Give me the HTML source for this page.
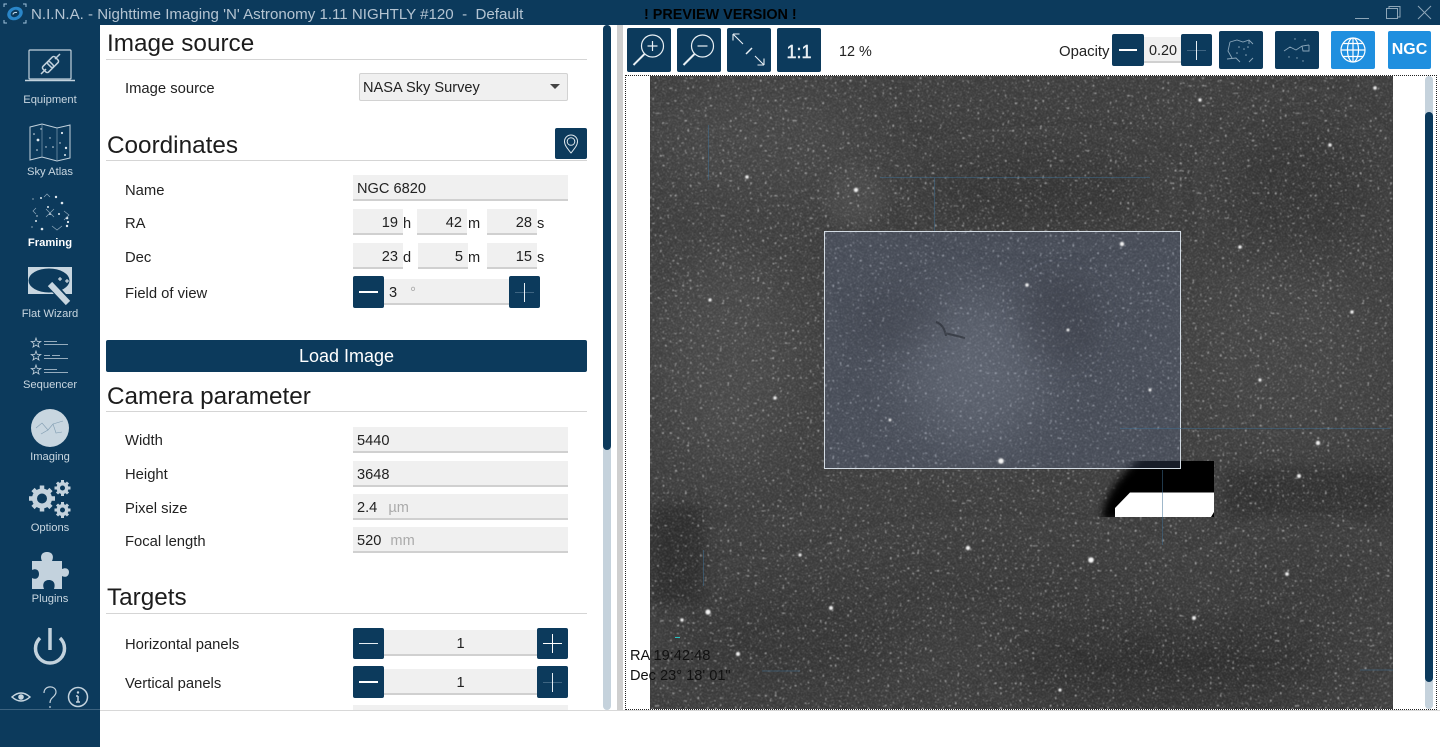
<!DOCTYPE html>
<html lang="en">
<head>
<meta charset="utf-8">
<title>N.I.N.A. Framing</title>
<style>
html,body{margin:0;padding:0;background:#fff}
body{position:relative;width:1440px;height:747px;overflow:hidden;font-family:"Liberation Sans",sans-serif;color:#1a1a1a}
.a{position:absolute}
.top{left:0;top:0;width:1440px;height:25px;background:#0c3a5c}
.side{left:0;top:25px;width:100px;height:722px;background:#0c3a5c}
.nav{position:absolute;left:0;width:100px;text-align:center;font-size:11.2px;color:#c8d6e0;white-space:nowrap}
.h{position:absolute;left:107px;font-size:24.3px;line-height:28px;white-space:nowrap;color:#1c1c1c}
.hl{position:absolute;left:106px;width:481px;height:1px;background:#d5d5d5}
.l{position:absolute;left:125px;font-size:14.8px;line-height:18px;white-space:nowrap;color:#222}
.i{position:absolute;background:#f0f0f0;border-bottom:2px solid #d0d0d0;box-sizing:border-box;font-size:14.6px;line-height:28px;color:#222;white-space:nowrap}
.r{text-align:right;padding-right:6px}
.u{position:absolute;font-size:14.6px;line-height:18px;color:#222}
.b{position:absolute;background:#0c3a5c;border-radius:2px}
.b svg{display:block;width:100%;height:100%}
.g{color:#aaa}
</style>
</head>
<body>
<div class="a top"></div>
<svg class="a" style="left:3px;top:2px" width="24" height="22" viewBox="0 0 24 22" fill="none">
<path d="M1 5V2H4M20 2H23V5M23 18V21H20M4 21H1V18" stroke="#9fc3dc" stroke-width="1"/>
<ellipse cx="12" cy="11.500" rx="8" ry="6.500" fill="#2a86c8" transform="rotate(-25 12 11.500)"/>
<ellipse cx="12" cy="11.500" rx="4.500" ry="3.500" fill="#0c3a5c" transform="rotate(-25 12 11.500)"/>
<path d="M10 12.500a3 2 0 0 1 4-2" stroke="#cfe4f2" stroke-width="1"/>
</svg>
<div class="a" style="left:31px;top:6px;font-size:15.1px;line-height:18px;color:#b4c4d2;white-space:pre">N.I.N.A. - Nighttime Imaging 'N' Astronomy 1.11 NIGHTLY #120  -  Default</div>
<div class="a" style="left:644px;top:6px;font-size:14.4px;line-height:18px;font-weight:bold;color:#000;white-space:nowrap">! PREVIEW VERSION !</div>
<svg class="a" style="left:1350px;top:0" width="90" height="25" viewBox="0 0 90 25" fill="none" stroke="#8ea6b8" stroke-width="1">
<path d="M5 18.500H19"/>
<path d="M36.500 8.500H47.500V18.500H36.500ZM39 8V6.500H50V17H48"/>
<path d="M68 6L81 19M81 6L68 19"/>
</svg>

<div class="a side"></div>
<svg class="a" style="left:0;top:25px" width="100" height="700" viewBox="0 25 100 700" fill="none">
<!-- Equipment -->
<g stroke="#c3d2dd">
<rect x="29" y="50" width="42" height="29" rx="1" stroke-width="1.200"/>
<path d="M25 80.500H75" stroke-width="1.500"/>
<path d="M41 74L46 69M55 59L60 54" stroke-width="1.500"/>
<rect x="44" y="62" width="8" height="10" rx="2" transform="rotate(45 48 67)" stroke-width="1.500"/>
<rect x="49" y="57" width="8" height="10" rx="2" transform="rotate(45 53 62)" stroke-width="1.500"/>
</g>
<!-- Sky atlas -->
<path d="M30 127L42 124L57 128L70 125V158L57 161L42 157L30 160Z" stroke="#c3d2dd" stroke-width="1"/>
<path d="M42 124V157M57 128V161" stroke="#7f9db2" stroke-width=".7"/>
<g fill="#dfe8ee">
<circle cx="38" cy="140" r="1.400"/><circle cx="34" cy="134" r=".8"/><circle cx="41" cy="129" r=".7"/><circle cx="50" cy="138" r=".7"/><circle cx="62" cy="133" r="1.100"/><circle cx="66" cy="148" r="1.200"/><circle cx="53" cy="147" r=".8"/><circle cx="37" cy="150" r=".8"/><circle cx="60" cy="143" r=".7"/><circle cx="46" cy="147" r=".7"/><circle cx="65" cy="155" r="1"/>
</g>
<!-- Framing -->
<g fill="#dfe8ee">
<circle cx="56" cy="197" r="1.200"/><circle cx="41" cy="198" r="1"/><circle cx="62" cy="203" r="1.300"/><circle cx="33" cy="199" r=".6"/><circle cx="48" cy="207" r="1"/><circle cx="50" cy="214" r="1"/><circle cx="67" cy="218" r="1.300"/><circle cx="68" cy="222" r="1.100"/><circle cx="36" cy="221" r="1"/><circle cx="59" cy="214" r="1"/><circle cx="42" cy="229" r="1.300"/><circle cx="67" cy="226" r="1.200"/><circle cx="32" cy="227" r=".6"/><circle cx="37" cy="216" r=".7"/>
</g>
<path d="M44 197L47 194L50 197M36 208L33 211L36 214M64 211L69 215L64 220M46 209L54 217M54 209L46 217M52 226L57 230L62 226" stroke="#8fa9bc" stroke-width=".7"/>
<!-- Flat wizard -->
<rect x="28" y="267" width="44" height="27" fill="#c8d6e0"/>
<ellipse cx="49" cy="280.500" rx="20.500" ry="12" fill="#0c3a5c"/>
<path d="M49 282L69 304" stroke="#0c3a5c" stroke-width="9"/>
<path d="M50 284L68 303" stroke="#c8d6e0" stroke-width="6"/>
<path d="M60 277v4M58 279h4M67 279v4M65 281h4" stroke="#e6eef3" stroke-width="1"/>
<!-- Sequencer -->
<g stroke="#c3d2dd" stroke-width=".8">
<path d="M36 338L37.200 341.500H40.800L38 343.700L39 347L36 345L33 347L34 343.700L31.200 341.500H34.800Z"/>
<path d="M36 351L37.200 354.500H40.800L38 356.700L39 360L36 358L33 360L34 356.700L31.200 354.500H34.800Z"/>
<path d="M36 365L37.200 368.500H40.800L38 370.700L39 374L36 372L33 374L34 370.700L31.200 368.500H34.800Z"/>
<path d="M44 341.500H57M44 344.500H68M44 355.500H50M52 355.500H60M44 358.500H68M44 369.500H57M44 372.500H68"/>
</g>
<!-- Imaging -->
<circle cx="50" cy="428" r="19" fill="#c8d6e0"/>
<path d="M36 428L42 423L48 430L53 424L63 421M41 434L48 430M53 424L56 433L62 432" stroke="#7f9bb0" stroke-width=".6"/>
<!-- Options -->
<g fill="#c3d2dd" stroke="#c3d2dd">
<circle cx="42" cy="498.500" r="10" stroke="none"/>
<path d="M42 485.500V511.500M29 498.500H55M33 489.500L51 507.500M51 489.500L33 507.500" stroke-width="4.500" fill="none"/>
<circle cx="62.500" cy="488" r="6" stroke="none"/>
<path d="M62.500 480V496M54.500 488H70.500M57 482.500L68 493.500M68 482.500L57 493.500" stroke-width="3" fill="none"/>
<circle cx="62.500" cy="510" r="6" stroke="none"/>
<path d="M62.500 502V518M54.500 510H70.500M57 504.500L68 515.500M68 504.500L57 515.500" stroke-width="3" fill="none"/>
</g>
<circle cx="42" cy="498.500" r="5" fill="#0c3a5c"/>
<circle cx="62.500" cy="488" r="2.500" fill="#0c3a5c"/>
<circle cx="62.500" cy="510" r="2.500" fill="#0c3a5c"/>
<!-- Plugins -->
<path d="M32 561H42C40 557 41 552 47 552C53 552 54 557 52 561H62V569C66 567 69 569 69 572C69 576 66 578 62 576V589H54C56 583 53 580 49 580C44 580 42 584 44 589H32V578C36 580 39 578 39 574C39 570 36 568 32 570Z" fill="#c3d2dd"/>
<!-- Power -->
<path d="M40 638A14.500 14.500 0 1 0 60 638" stroke="#c3d2dd" stroke-width="3.500"/>
<path d="M50 628V650" stroke="#c3d2dd" stroke-width="3.500"/>
<!-- Bottom -->
<path d="M12 697Q21 689 30 697Q21 705 12 697Z" stroke="#c8d6e0" stroke-width="1.500" fill="none"/>
<circle cx="21" cy="697" r="2.800" fill="#c8d6e0"/>
<path d="M44 693C44 685 56 685 56 692C56 697 50 697 50 703M50 706V708" stroke="#c3d2dd" stroke-width="1.200"/>
<circle cx="78" cy="697" r="9.500" stroke="#c3d2dd" stroke-width="1.500"/>
<path d="M78 696V702M76 702H80M76 696H78" stroke="#c3d2dd" stroke-width="1.500"/>
<circle cx="78" cy="692.500" r="1.200" fill="#c3d2dd"/>
</svg>
<div class="nav" style="top:94px">Equipment</div>
<div class="nav" style="top:166px">Sky Atlas</div>
<div class="nav" style="top:237px;font-weight:bold;color:#fff">Framing</div>
<div class="nav" style="top:308px">Flat Wizard</div>
<div class="nav" style="top:379px">Sequencer</div>
<div class="nav" style="top:451px">Imaging</div>
<div class="nav" style="top:522px">Options</div>
<div class="nav" style="top:593px">Plugins</div>

<!-- left panel -->
<div class="h" style="top:30px">Image source</div><div class="hl" style="top:59px"></div>
<div class="l" style="top:80px">Image source</div>
<div class="i" style="left:359px;top:73px;width:209px;height:28px;border:1px solid #d2d2d2;border-radius:2px;padding-left:3px;line-height:29px">NASA Sky Survey</div>
<div class="a" style="left:550px;top:84px;width:0;height:0;border-left:5px solid transparent;border-right:5px solid transparent;border-top:5px solid #444"></div>

<div class="h" style="top:132px">Coordinates</div><div class="hl" style="top:160px"></div>
<div class="b" style="left:555px;top:128px;width:32px;height:31px"><svg viewBox="0 0 32 31" fill="none" stroke="#dfe8ee"><path d="M16 25C12 20 9.500 17 9.500 13.500A6.500 6.500 0 0 1 22.500 13.500C22.500 17 20 20 16 25Z"/><circle cx="16" cy="13.500" r="3.800"/></svg></div>

<div class="l" style="top:182px">Name</div>
<div class="i" style="left:353px;top:175px;width:215px;height:26px;padding-left:4px">NGC 6820</div>
<div class="l" style="top:215px">RA</div>
<div class="i r" style="left:353px;top:209px;width:50px;height:26px;padding-right:5px">19</div><div class="u" style="left:403px;top:215px">h</div>
<div class="i r" style="left:417px;top:209px;width:50px;height:26px;padding-right:5px">42</div><div class="u" style="left:468px;top:215px">m</div>
<div class="i r" style="left:487px;top:209px;width:50px;height:26px;padding-right:5px">28</div><div class="u" style="left:537px;top:215px">s</div>
<div class="l" style="top:249px">Dec</div>
<div class="i r" style="left:353px;top:243px;width:50px;height:26px;padding-right:5px">23</div><div class="u" style="left:403px;top:249px">d</div>
<div class="i r" style="left:418px;top:243px;width:50px;height:26px;padding-right:5px">5</div><div class="u" style="left:468px;top:249px">m</div>
<div class="i r" style="left:487px;top:243px;width:50px;height:26px;padding-right:5px">15</div><div class="u" style="left:537px;top:249px">s</div>
<div class="l" style="top:285px">Field of view</div>
<div class="i" style="left:384px;top:279px;width:125px;height:26px;padding-left:5px;line-height:29px">3 <span class="g" style="margin-left:9px">°</span></div>
<div class="b" style="left:353px;top:276px;width:31px;height:32px"><svg viewBox="0 0 31 32"><path d="M6 16H25" stroke="#fff" stroke-width="2"/></svg></div>
<div class="b" style="left:509px;top:276px;width:31px;height:32px"><svg viewBox="0 0 31 32"><path d="M6 16.500H25" stroke="#3f6582"/><path d="M15.500 7V26" stroke="#e6eef3"/></svg></div>

<div class="b" style="left:106px;top:340px;width:481px;height:32px;color:#fff;font-size:18px;line-height:33px;text-align:center">Load Image</div>

<div class="h" style="top:383px">Camera parameter</div><div class="hl" style="top:411px"></div>
<div class="l" style="top:432px">Width</div>
<div class="i" style="left:353px;top:427px;width:215px;height:26px;padding-left:4px">5440</div>
<div class="l" style="top:466px">Height</div>
<div class="i" style="left:353px;top:461px;width:215px;height:26px;padding-left:4px">3648</div>
<div class="l" style="top:500px">Pixel size</div>
<div class="i" style="left:353px;top:494px;width:215px;height:26px;padding-left:4px">2.4 <span class="g" style="margin-left:7px">µm</span></div>
<div class="l" style="top:533px">Focal length</div>
<div class="i" style="left:353px;top:527px;width:215px;height:26px;padding-left:4px">520 <span class="g" style="margin-left:5px">mm</span></div>

<div class="h" style="top:584px">Targets</div><div class="hl" style="top:613px"></div>
<div class="l" style="top:636px">Horizontal panels</div>
<div class="i" style="left:384px;top:630px;width:153px;height:26px;text-align:center;line-height:29px">1</div>
<div class="b" style="left:353px;top:628px;width:31px;height:31px"><svg viewBox="0 0 31 31"><path d="M6 15.500H25" stroke="#e6eef3"/></svg></div>
<div class="b" style="left:537px;top:628px;width:31px;height:31px"><svg viewBox="0 0 31 31"><path d="M6 15.500H25M15.500 6V25" stroke="#fff"/></svg></div>
<div class="l" style="top:675px">Vertical panels</div>
<div class="i" style="left:384px;top:669px;width:153px;height:26px;text-align:center;line-height:29px">1</div>
<div class="b" style="left:353px;top:666px;width:31px;height:32px"><svg viewBox="0 0 31 32"><path d="M6 16H25" stroke="#fff" stroke-width="2"/></svg></div>
<div class="b" style="left:537px;top:666px;width:31px;height:32px"><svg viewBox="0 0 31 32"><path d="M6 16.500H25" stroke="#3f6582"/><path d="M15.500 7V26" stroke="#e6eef3"/></svg></div>
<div class="a" style="left:353px;top:705px;width:215px;height:5px;background:#f0f0f0"></div>

<!-- scroll + splitter -->
<div class="a" style="left:603px;top:25px;width:8px;height:685px;background:#c5d2dc;border-radius:4px"></div>
<div class="a" style="left:603px;top:25px;width:8px;height:425px;background:#0c3a5c;border-radius:4px"></div>
<div class="a" style="left:617px;top:25px;width:6px;height:685px;background:#cfcfcf"></div>

<!-- sky image -->
<svg class="a" style="left:650px;top:76px" width="743" height="633" viewBox="650 76 743 633">
<defs>
<filter id="bl" x="-50%" y="-50%" width="200%" height="200%"><feGaussianBlur stdDeviation="26"/></filter>
<filter id="bm" x="-50%" y="-50%" width="200%" height="200%"><feGaussianBlur stdDeviation="14"/></filter>
<filter id="bs" x="-50%" y="-50%" width="200%" height="200%"><feGaussianBlur stdDeviation="7"/></filter>
<filter id="bt" x="-50%" y="-50%" width="200%" height="200%"><feGaussianBlur stdDeviation="4"/></filter>
<filter id="st" x="-5%" y="-5%" width="110%" height="110%"><feGaussianBlur stdDeviation=".7"/></filter>
<filter id="n" x="0" y="0" width="100%" height="100%">
<feTurbulence type="fractalNoise" baseFrequency="0.8" numOctaves="2" seed="7"/>
<feColorMatrix values="0 0 0 0 1  0 0 0 0 1  0 0 0 0 1  5 0 0 0 -2.500"/>
<feGaussianBlur stdDeviation=".45"/>
</filter>
<filter id="n2" x="0" y="0" width="100%" height="100%">
<feTurbulence type="fractalNoise" baseFrequency="0.4" numOctaves="1" seed="21"/>
<feColorMatrix values="0 0 0 0 1  0 0 0 0 1  0 0 0 0 1  12 0 0 0 -7.800"/>
<feGaussianBlur stdDeviation=".5"/>
</filter>
<clipPath id="c"><rect x="650" y="76" width="743" height="633"/></clipPath>
<clipPath id="cb"><rect x="1060" y="461" width="154" height="56"/></clipPath>
</defs>
<g clip-path="url(#c)">
<rect x="650" y="76" width="743" height="633" fill="#3a3a3a"/>
<g filter="url(#bl)">
<ellipse cx="760" cy="140" rx="110" ry="55" fill="#434343"/>
<ellipse cx="1040" cy="190" rx="120" ry="28" fill="#2e2e2e"/>
<ellipse cx="1300" cy="190" rx="70" ry="70" fill="#333"/>
<ellipse cx="730" cy="360" rx="70" ry="110" fill="#444"/>
<ellipse cx="1280" cy="350" rx="100" ry="90" fill="#3f3f3f"/>
<ellipse cx="790" cy="640" rx="120" ry="50" fill="#333"/>
<ellipse cx="1170" cy="665" rx="170" ry="40" fill="#2b2b2b"/>
<ellipse cx="1000" cy="590" rx="170" ry="35" fill="#363636"/>
<ellipse cx="1300" cy="590" rx="80" ry="40" fill="#363636"/>
</g>
<rect x="650" y="505" width="55" height="100" fill="#2c2c2c" filter="url(#bs)"/>
<rect x="1222" y="468" width="170" height="48" fill="#2f2f2f" filter="url(#bs)"/>
<circle cx="855" cy="197" r="30" fill="#454545" filter="url(#bs)"/>
<rect x="650" y="76" width="743" height="633" filter="url(#n)" opacity=".2"/>
<rect x="650" y="76" width="743" height="633" filter="url(#n2)" opacity=".5"/>
<!-- black/white block -->
<g clip-path="url(#cb)">
<path d="M1102 520C1102 498 1118 478 1142 455H1240V520Z" fill="#000" filter="url(#bt)"/>
<rect x="1150" y="461" width="64" height="56" fill="#000"/>
</g>
<path d="M1115 508L1130 492.500H1214V512L1211 517H1115Z" fill="#fff"/>
<!-- selection -->
<rect x="824.500" y="231.500" width="356" height="237" fill="#6f83b5" fill-opacity=".22" stroke="#d3dbe3"/>
<ellipse cx="975" cy="370" rx="70" ry="75" fill="#aab3c4" opacity=".2" filter="url(#bl)"/>
<ellipse cx="1060" cy="320" rx="40" ry="45" fill="#20242c" opacity=".18" filter="url(#bm)"/>
<ellipse cx="900" cy="320" rx="45" ry="30" fill="#20242c" opacity=".12" filter="url(#bm)"/>
<path d="M936 322C942 324 945 330 946 336M945 333C952 335 958 336 965 338" stroke="#23272e" stroke-width="2" fill="none" opacity=".55"/>
<!-- grid hints -->
<path d="M1162.500 470V545M934.500 177V231M880 177.500H1150M708.500 125V180M703.500 550V586M1120 428.500H1390M1393 670H1360M762 671H800" stroke="#3f6f93" stroke-width="1" opacity=".5" fill="none"/>
<path d="M675 637.500H680" stroke="#28c4c4" stroke-width="1"/>
<!-- bright stars -->
<g fill="#f2f2f2" filter="url(#st)">
<circle cx="1091" cy="560" r="2.800"/><circle cx="1001" cy="461" r="2.800"/><circle cx="1122" cy="244" r="2.200"/><circle cx="708" cy="612" r="2.600"/><circle cx="968" cy="548" r="2.200"/><circle cx="856" cy="190" r="2.200"/><circle cx="1318" cy="443" r="2.200"/><circle cx="1299" cy="476" r="2"/><circle cx="1027" cy="285" r="1.800"/><circle cx="1194" cy="618" r="2"/><circle cx="747" cy="177" r="1.800"/><circle cx="1330" cy="145" r="1.800"/><circle cx="1375" cy="88" r="1.800"/><circle cx="1200" cy="100" r="1.700"/><circle cx="831" cy="608" r="2"/><circle cx="775" cy="398" r="1.700"/><circle cx="1240" cy="247" r="1.800"/><circle cx="1068" cy="330" r="1.500"/><circle cx="1150" cy="390" r="1.500"/><circle cx="890" cy="420" r="1.400"/><circle cx="1352" cy="312" r="1.700"/><circle cx="1287" cy="574" r="1.900"/><circle cx="738" cy="654" r="2"/><circle cx="1060" cy="690" r="1.600"/><circle cx="710" cy="300" r="1.600"/><circle cx="1260" cy="380" r="1.600"/><circle cx="800" cy="555" r="1.600"/><circle cx="682" cy="620" r="1.700"/>
</g>
</g>
</svg>

<!-- dotted frame -->
<div class="a" style="left:625px;top:75px;width:812px;height:635px;border:1px dotted #222;box-sizing:border-box"></div>
<!-- right scroll -->
<div class="a" style="left:1425px;top:76px;width:8px;height:633px;background:#c5d2dc;border-radius:4px"></div>
<div class="a" style="left:1425px;top:112px;width:8px;height:570px;background:#0c3a5c;border-radius:4px"></div>

<div class="a" style="left:630px;top:647px;font-size:14.600px;line-height:18px;color:#111;white-space:nowrap">RA 19:42:48</div>
<div class="a" style="left:630px;top:667px;font-size:14.600px;line-height:18px;color:#111;white-space:nowrap">Dec 23° 18' 01"</div>

<!-- toolbar -->
<div class="b" style="left:627px;top:28px;width:44px;height:44px"><svg viewBox="0 0 44 44" fill="none" stroke="#e8eff4" stroke-width="1.200"><circle cx="25.500" cy="18" r="11"/><path d="M6.500 37L17.500 26" stroke-width="2"/><path d="M25.500 13V23M20.500 18H30.500"/></svg></div>
<div class="b" style="left:677px;top:28px;width:44px;height:44px"><svg viewBox="0 0 44 44" fill="none" stroke="#e8eff4" stroke-width="1.200"><circle cx="25.500" cy="18" r="11"/><path d="M6.500 37L17.500 26" stroke-width="2"/><path d="M20.500 18H30.500"/></svg></div>
<div class="b" style="left:727px;top:28px;width:44px;height:44px"><svg viewBox="0 0 44 44" fill="none" stroke="#e8eff4" stroke-width="1.100"><path d="M6 6L16 16M6 6V12.500M6 6H12.500M28 28L37 37M37 37V30.500M37 37H30.500"/><path d="M19 26L25 20" stroke-width="1.500"/></svg></div>
<div class="b" style="left:777px;top:28px;width:44px;height:44px;color:#e8eff4;font-size:18px;line-height:48px;text-align:center;-webkit-text-stroke:.4px #e8eff4">1:1</div>
<div class="a" style="left:839px;top:43px;font-size:14.4px;line-height:18px;color:#222">12 %</div>
<div class="a" style="left:1059px;top:43px;font-size:14.9px;line-height:18px;color:#222">Opacity</div>
<div class="i" style="left:1144px;top:37px;width:38px;height:26px;text-align:center;font-size:14.4px;line-height:28px">0.20</div>
<div class="b" style="left:1112px;top:34px;width:32px;height:32px"><svg viewBox="0 0 32 32"><path d="M7 16H25" stroke="#fff" stroke-width="2"/></svg></div>
<div class="b" style="left:1181px;top:34px;width:31px;height:32px"><svg viewBox="0 0 31 32"><path d="M6 16.500H25" stroke="#3f6582"/><path d="M15.500 7V26" stroke="#e6eef3"/></svg></div>
<div class="b" style="left:1219px;top:31px;width:44px;height:38px"><svg viewBox="0 0 44 38" fill="none" stroke="#8aa6ba" stroke-width=".9"><path d="M11 11L18 9L24 11L30 9L34 13M11 11L9 20L13 27M8 28L17 27L21 31M30 31L34 27M30 9V13"/><g fill="#8aa6ba" stroke="none"><circle cx="20" cy="16" r=".8"/><circle cx="25" cy="18" r=".8"/><circle cx="29" cy="16" r=".8"/><circle cx="18" cy="22" r=".8"/><circle cx="27" cy="24" r=".8"/></g></svg></div>
<div class="b" style="left:1275px;top:31px;width:44px;height:38px"><svg viewBox="0 0 44 38" fill="none" stroke="#8aa6ba" stroke-width=".9"><path d="M9 20L15 16L21 19L27 15L34 14M27 15L28 20L34 20L34 14"/><g fill="#8aa6ba" stroke="none"><circle cx="20" cy="8" r=".7"/><circle cx="30" cy="9" r=".7"/><circle cx="14" cy="26" r=".7"/><circle cx="22" cy="27" r=".7"/><circle cx="28" cy="30" r=".7"/></g></svg></div>
<div class="b" style="left:1331px;top:31px;width:44px;height:38px;background:#1f8fdf"><svg viewBox="0 0 44 38" fill="none" stroke="#fff" stroke-width="1.200"><circle cx="22" cy="19" r="12"/><ellipse cx="22" cy="19" rx="5.500" ry="12"/><path d="M22 7V31M10 19H34M12 12.500H32M12 25.500H32"/></svg></div>
<div class="b" style="left:1388px;top:31px;width:43px;height:38px;background:#1f8fdf;color:#fff;font-size:16px;font-weight:bold;line-height:38px;text-align:center">NGC</div>

<!-- bottom strip -->
<div class="a" style="left:100px;top:710px;width:1340px;height:1px;background:#d8d8d8"></div>
<div class="a" style="left:0;top:709px;width:100px;height:1px;background:#5f7f97;opacity:.6"></div>
</body>
</html>
